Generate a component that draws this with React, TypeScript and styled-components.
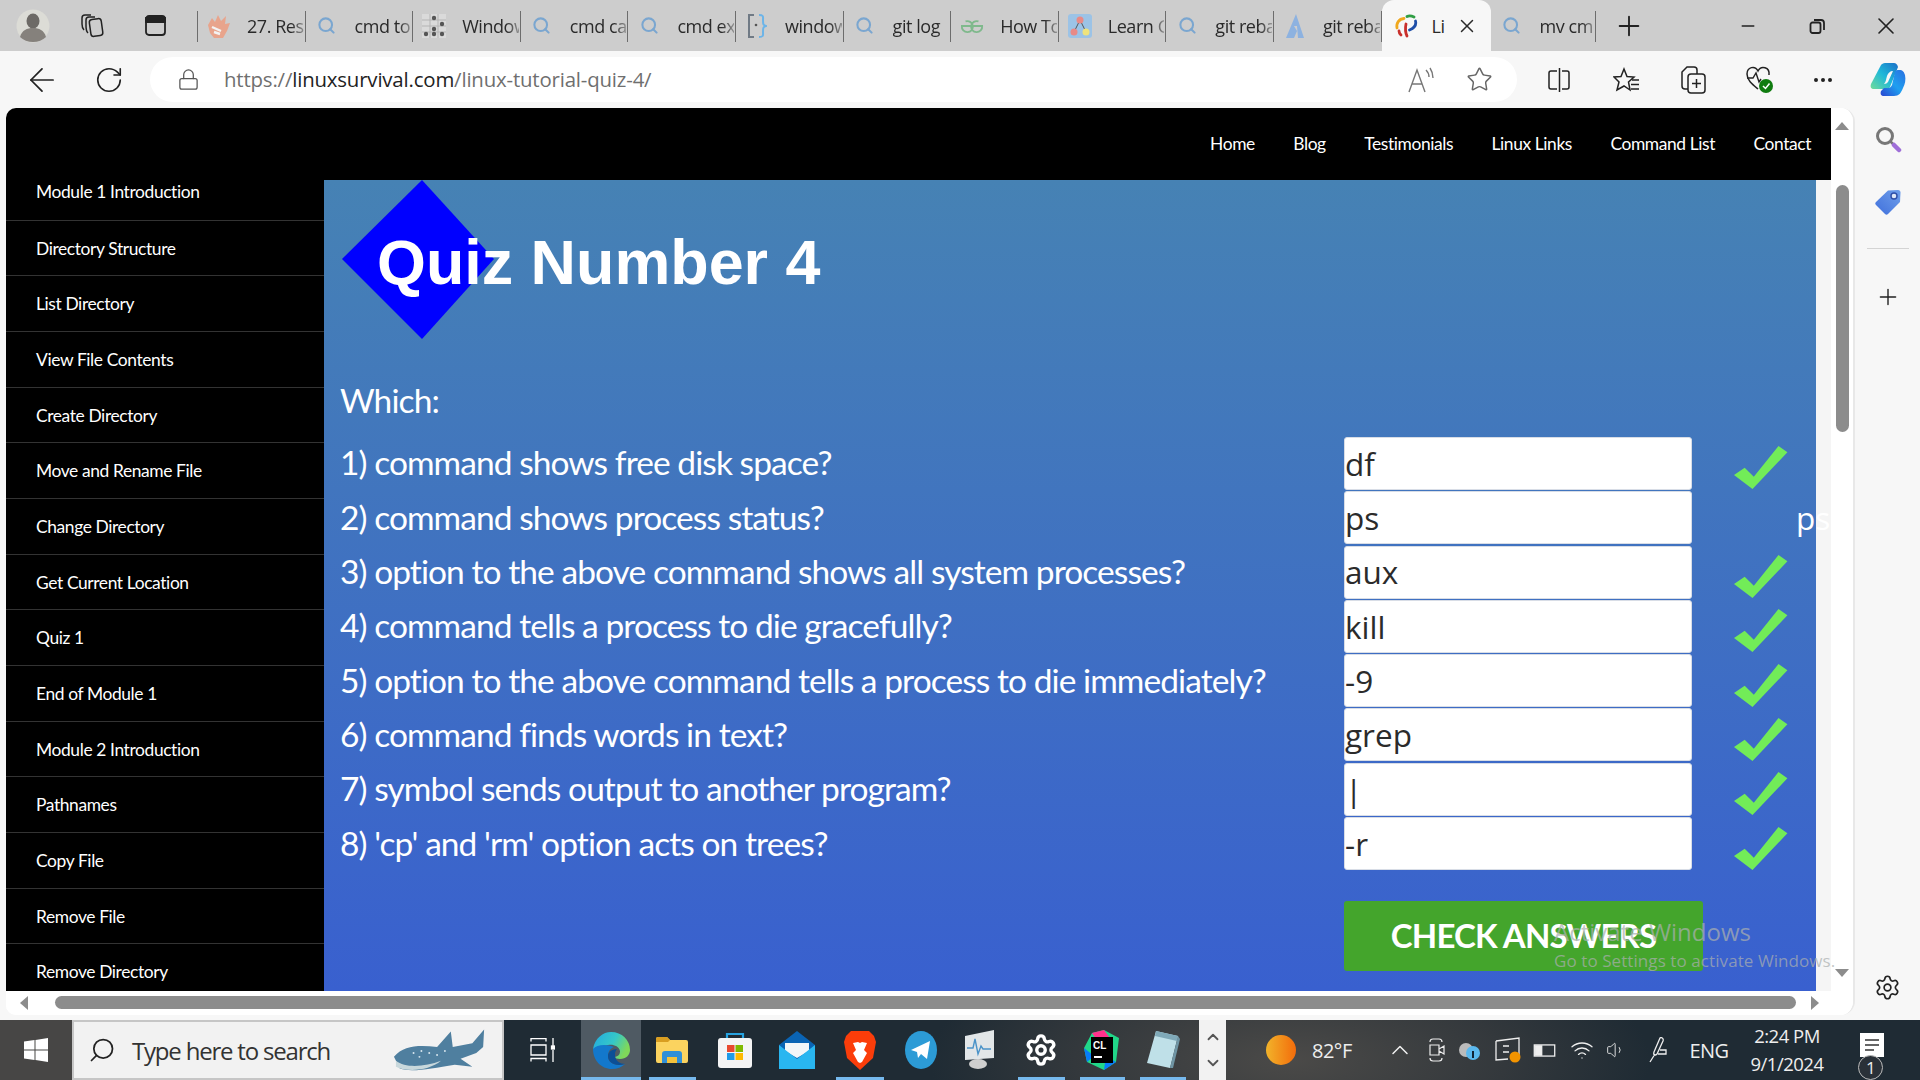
import React from "react";
import styled, { createGlobalStyle } from "styled-components";
import {
  ArrowLeft, RotateCw, Lock, Star, MoreHorizontal, Search, X, Plus, Minus,
  Settings, ChevronUp, ChevronDown, Wifi, Volume1,
} from "lucide-react";

const Global = createGlobalStyle`
  html, body { margin: 0; padding: 0; width: 1920px; height: 1080px; overflow: hidden; background: #f7f7f7; }
  * { box-sizing: border-box; }
`;

const Shell = styled.div`
  width: 1920px; height: 1080px; display: flex; flex-direction: column; overflow: hidden; position: relative;
  font-family: "Lato", "Liberation Sans", sans-serif; background: #f7f7f7;
`;

/* ---------- tab strip ---------- */
const TabStrip = styled.div`
  height: 51px; flex: none; display: flex; align-items: stretch; background: #cdcdcd; color: #222;
`;
const StripTool = styled.div<{ $w: number }>`
  width: ${(p) => p.$w}px; flex: none; display: flex; align-items: center; justify-content: center;
`;
const Tab = styled.div<{ $active?: boolean; $w?: number }>`
  width: ${(p) => p.$w ?? 107.6}px; flex: none; display: flex; align-items: center; height: 51px;
  gap: ${(p) => (p.$active ? 14 : 16)}px;
  padding-left: ${(p) => (p.$active ? 12 : 9)}px; padding-right: 2px; overflow: hidden; white-space: nowrap; position: relative;
  font: 400 18px "Open Sans", "Liberation Sans", sans-serif; letter-spacing: -0.45px; color: #2a2a2a;
  background: ${(p) => (p.$active ? "#f7f7f7" : "transparent")};
  border-radius: ${(p) => (p.$active ? "12px 12px 0 0" : "0")};
  &::after {
    content: ""; position: absolute; right: 0; top: 11px; bottom: 9px; width: 1px;
    background: ${(p) => (p.$active ? "transparent" : "#6d6d6d")};
  }
`;
const TabStart = styled.div`
  width: 1px; margin: 11px 0 9px; background: #6d6d6d; flex: none;
`;
const TabIcon = styled.span`
  width: 24px; height: 24px; flex: none; display: flex; align-items: center; justify-content: center;
`;
const TabLabel = styled.span`
  flex: 1; min-width: 0; overflow: hidden;
  -webkit-mask-image: linear-gradient(90deg, #000 78%, rgba(0, 0, 0, 0.35) 100%);
  mask-image: linear-gradient(90deg, #000 78%, rgba(0, 0, 0, 0.35) 100%);
`;
const TabClose = styled.span`
  position: absolute; right: 13px; top: 15px; width: 22px; height: 22px; background: #f7f7f7;
  display: flex; align-items: center; justify-content: center;
`;
const Spring = styled.div` flex: 1; `;

/* ---------- toolbar ---------- */
const Toolbar = styled.div`
  height: 57px; flex: none; display: flex; align-items: center; background: #f7f7f7; color: #222;
`;
const ToolBtn = styled.div<{ $w: number }>`
  width: ${(p) => p.$w}px; flex: none; height: 45px; display: flex; align-items: center; justify-content: center;
`;
const AddressBar = styled.div`
  width: 1367px; height: 45px; flex: none; background: #fff; border-radius: 23px; margin: 0 9px 0 0;
  display: flex; align-items: center; padding: 0 6px 0 27px;
`;
const Url = styled.div`
  margin: -2px 0 0 24px; font: 400 20.4px "Open Sans", "Liberation Sans", sans-serif; letter-spacing: -0.17px; color: #6f6f6f; white-space: nowrap;
  b { font-weight: 400; color: #222; }
`;

/* ---------- body ---------- */
const Body = styled.div` flex: 1; display: flex; min-height: 0; `;
const Pane = styled.div`
  width: 1849px; margin-left: 6px; margin-bottom: 5px; flex: none; display: flex; flex-direction: column; background: #fff;
  border-radius: 10px 14px 14px 10px; overflow: hidden; border-right: 2px solid #e8e8e8;
`;
const PaneTop = styled.div` height: 883px; flex: none; display: flex; `;
const Page = styled.div` width: 1825px; flex: none; display: flex; flex-direction: column; background: #f5f5f5; `;
const TopNav = styled.nav`
  height: 72px; flex: none; display: flex; justify-content: flex-end; align-items: center; gap: 38.5px; padding: 0 20px 2px 0;
  font-size: 17.4px; letter-spacing: -0.4px; color: #fff; background: #000;
`;
const Columns = styled.div` flex: 1; display: flex; min-height: 0; `;
const SideNav = styled.div` width: 318px; flex: none; overflow: hidden; background: #000; `;
const SideItem = styled.div`
  height: 55.69px; padding: 16px 0 0 30px; line-height: 24px; font-size: 17.4px; letter-spacing: -0.38px; color: #fff;
  border-bottom: 1px solid #333; white-space: nowrap;
  &:first-child { height: 40.5px; padding-top: 0; }
`;
const Main = styled.main`
  width: 1492px; flex: none; padding-left: 16px; background: linear-gradient(180deg, #4682b4 0%, #3960cf 100%); position: relative;
`;
const TitleBlock = styled.div`
  height: 159px; position: relative; display: flex; align-items: center; padding: 4px 0 0 37px; margin-bottom: 41px;
`;
const Diamond = styled.svg`
  position: absolute; left: 2px; top: 0; width: 152px; height: 159px;
`;
const Title = styled.h1`
  position: relative; margin: 0; font: 700 62.85px "Liberation Sans", Arial, sans-serif; color: #fff; white-space: nowrap;
`;
const Which = styled.div`
  font-size: 33.5px; line-height: 40px; height: 56.35px; color: #fff; letter-spacing: -0.9px;
`;
const Row = styled.div`
  height: 54.3px; display: flex; align-items: center;
`;
const Question = styled.div`
  width: 1004px; flex: none; margin-top: -2px; font-size: 33.5px; color: #fff; letter-spacing: -0.93px; white-space: nowrap;
`;
const AnswerBox = styled.div`
  width: 348px; height: 53px; flex: none; background: #fff; border: 1px solid #d8dde6; border-radius: 3px;
  font: 400 31.5px "Open Sans", "Liberation Sans", sans-serif; color: #2b2b2b; display: flex; align-items: center; line-height: 1;
`;
const Verdict = styled.div`
  margin: 9px 0 0 42px; width: 54px; height: 43px; flex: none;
`;
const WrongAnswer = styled.div`
  margin-left: 104px; flex: none; font: 400 31.5px "Open Sans", "Liberation Sans", sans-serif; color: #fff;
  position: relative; z-index: 2;
`;
const CheckButton = styled.div`
  margin: 30px 0 0 1004px; width: 359px; height: 70px; padding-bottom: 2px; background: #44a52c; color: #fff; display: flex; align-items: center; justify-content: center;
  font-weight: 700; font-size: 33px; letter-spacing: -0.85px; border-radius: 3px;
`;
const ScrollV = styled.div`
  width: 22px; flex: none; background: #fff; position: relative;
`;
const ThumbV = styled.div`
  position: absolute; left: 5px; top: 77px; width: 13px; height: 247px; background: #8c8c8c; border-radius: 7px;
`;
const ArrowV = styled.div<{ $down?: boolean }>`
  position: absolute; left: 4px; ${(p) => (p.$down ? "bottom: 14px; border-top: 8px solid #8c8c8c;" : "top: 14px; border-bottom: 8px solid #8c8c8c;")}
  width: 0; height: 0; border-left: 7.5px solid transparent; border-right: 7.5px solid transparent;
`;
const ScrollH = styled.div`
  flex: 1; display: flex; align-items: flex-start; padding: 5px 0 0 14px; background: #fff;
`;
const ArrowH = styled.div<{ $right?: boolean }>`
  width: 0; height: 0; flex: none; border-top: 7px solid transparent; border-bottom: 7px solid transparent;
  ${(p) => (p.$right ? "border-left: 8px solid #8c8c8c;" : "border-right: 8px solid #8c8c8c;")}
`;
const ThumbH = styled.div`
  width: 1741px; height: 13px; margin: 0 15px 0 27px; background: #8c8c8c; border-radius: 7px; flex: none;
`;
const SidePanel = styled.aside`
  flex: 1; display: flex; flex-direction: column; align-items: center; background: #f7f7f7; color: #222; padding-bottom: 16px;
`;
const PanelBtn = styled.div<{ $mt?: number }>`
  width: 40px; height: 34px; display: flex; align-items: center; justify-content: center; margin-top: ${(p) => p.$mt ?? 0}px;
`;
const PanelRule = styled.div<{ $mt?: number }>`
  width: 42px; height: 1px; background: #d4d4d4; margin-top: ${(p) => p.$mt ?? 0}px;
`;

/* ---------- taskbar ---------- */
const Taskbar = styled.div`
  height: 60px; flex: none; display: flex; align-items: stretch; color: #fff;
  background: radial-gradient(ellipse 360px 130px at 1290px 40px, #4b4a48 0%, #33383c 60%, #1f2b34 100%), #1f2b34;
`;
const StartBtn = styled.div`
  width: 72px; flex: none; background: #474645; display: flex; align-items: center; justify-content: center;
`;
const SearchBox = styled.div`
  width: 432px; flex: none; background: #f2f2f2; border: 2px solid #c6c6c6; display: flex; align-items: center; position: relative;
  padding-left: 14px; gap: 16px; color: #333; font: 400 24px "Open Sans", "Liberation Sans", sans-serif; letter-spacing: -1.2px; overflow: hidden; white-space: nowrap;
`;
const SearchGlyph = styled.span`
  display: flex; flex: none; transform: scaleX(-1);
`;
const Shark = styled.svg`
  position: absolute; right: 12px; top: 5px; width: 98px; height: 46px;
`;
const TaskBtn = styled.div<{ $w?: number; $active?: boolean; $on?: boolean }>`
  width: ${(p) => p.$w ?? 62}px; flex: none; display: flex; align-items: center; justify-content: center; position: relative;
  background: ${(p) => (p.$active ? "#4f5a63" : "transparent")};
  &::after {
    content: ""; position: absolute; left: ${(p) => (p.$active ? 0 : 8)}px; right: ${(p) => (p.$active ? 0 : 7)}px; bottom: 0; height: 3px;
    background: ${(p) => (p.$on ? "#76b9ed" : "transparent")};
  }
`;
const Overflow = styled.div`
  width: 27px; margin-left: 6px; flex: none; background: #f2f2f2; color: #555; display: flex; flex-direction: column; align-items: center; justify-content: space-around; padding: 4px 0;
`;
const Tray = styled.div`
  flex: 1; display: flex; align-items: center; font: 400 20px "Open Sans", "Liberation Sans", sans-serif; letter-spacing: -0.5px; color: #eee;
`;
const TrayItem = styled.div<{ $w: number }>`
  width: ${(p) => p.$w}px; flex: none; display: flex; align-items: center; justify-content: center; position: relative;
`;
const Clock = styled.div`
  width: 118px; flex: none; font-size: 18.5px; line-height: 28px; text-align: center; white-space: nowrap;
`;
const Weather = styled.div`
  width: 30px; height: 30px; border-radius: 50%; background: linear-gradient(90deg, #f2b32a, #f36c0b); margin-left: 40px; flex: none;
`;
const Temp = styled.div` margin-left: 16px; width: 68px; font-size: 20px; flex: none; `;
const NoticeBadge = styled.div`
  position: absolute; left: 12px; top: 22px; width: 25px; height: 25px; border-radius: 50%; border: 1px solid #bbb; background: #2a3138;
  font-size: 17px; line-height: 23px; text-align: center; color: #eee;
`;

/* ---------- overlay ---------- */
const Watermark = styled.div`
  position: absolute; left: 1554px; top: 913px; color: rgba(170, 175, 175, 0.72); pointer-events: none; white-space: nowrap;
  font-family: "Open Sans", "Liberation Sans", sans-serif;
  div:first-child { font-size: 24px; line-height: 38px; }
  div:last-child { font-size: 17px; line-height: 20px; letter-spacing: 0.08px; }
`;

/* ---------- drawings ---------- */
const Mag = () => <Search size={19} color="#7aa6d0" strokeWidth={2.6} />;
const Favicon = ({ kind }: { kind: string }) => {
  switch (kind) {
    case "hand":
      return (
        <svg width="24" height="24" viewBox="0 0 24 24">
          <path d="M1 11 5 4l3 4 3-7 3 6 5-5-1 8 5-1-3 8-4 7H7l-4-5z" fill="#e8a48c" />
          <path d="M5 13l9 4M7 18l6 2" stroke="#f3f3f3" strokeWidth="2.400" />
        </svg>
      );
    case "grid":
      return (
        <svg width="24" height="24" viewBox="0 0 24 24">
          <rect width="24" height="24" fill="#dadada" />
          <path d="M8 0v24M16 0v24M0 6h24M0 12h24M0 18h24" stroke="#b4b4b4" />
          <g fill="#555">
            <circle cx="12" cy="4" r="2.200" /><circle cx="20" cy="10" r="2.200" /><circle cx="12" cy="15" r="2.200" />
            <circle cx="4" cy="20" r="2.200" /><circle cx="12" cy="20" r="2.200" /><circle cx="20" cy="20" r="2.200" />
          </g>
        </svg>
      );
    case "brace":
      return (
        <svg width="20" height="24" viewBox="0 0 20 24" fill="none" strokeWidth="2">
          <path d="M7 1H2v22h5" stroke="#707a85" />
          <path d="M12 1c5 0 4 2 4 5 0 4 0 5 3 6-3 1-3 2-3 6 0 3 1 5-4 5" stroke="#6cb4e8" />
          <circle cx="9" cy="11" r="1.300" fill="#555" />
        </svg>
      );
    case "gfg":
      return (
        <svg width="26" height="16" viewBox="0 0 26 16" fill="none" stroke="#7fb98c" strokeWidth="2">
          <path d="M13 8H24A6 6 0 1 1 20 3" /><path d="M13 8H2A6 6 0 1 0 6 3" />
        </svg>
      );
    case "tree":
      return (
        <svg width="24" height="24" viewBox="0 0 24 24">
          <rect width="24" height="24" rx="3" fill="#9cc3e6" />
          <path d="M12 6 6 18M12 6l6 12" stroke="#555" />
          <circle cx="12" cy="6" r="3.500" fill="#e88a86" /><circle cx="6" cy="18" r="3.500" fill="#e88a86" /><circle cx="18" cy="18" r="3.500" fill="#efe37c" />
        </svg>
      );
    case "azure":
      return (
        <svg width="20" height="24" viewBox="0 0 20 24">
          <path d="M11 0 1 24h8l3-7-3-5 3 0 1 12h6z" fill="#8db2e0" />
        </svg>
      );
    default:
      return (
        <svg width="24" height="24" viewBox="0 0 24 24" fill="none" strokeWidth="2.800" strokeLinecap="round">
          <path d="M13 2.500C15 1.500 18 2 20 3" stroke="#2f9e44" />
          <path d="M21.500 7c1 4-1 7-6 9" stroke="#1f4fa8" />
          <path d="M3 14C2 9 5 5 10 4.500" stroke="#f0a81e" />
          <path d="M12 10c-1 5-1 8 1 12M5 17c0 2 1 3 2 4" stroke="#c9302c" />
        </svg>
      );
  }
};

const tabs: [string, string][] = [
  ["hand", "27. Rest"], ["mag", "cmd to r"], ["grid", "Windows"], ["mag", "cmd cat"], ["mag", "cmd exit"],
  ["brace", "windows"], ["mag", "git log"], ["gfg", "How To"], ["tree", "Learn Git"], ["mag", "git rebase"], ["azure", "git rebase"],
];

const navLinks = ["Home", "Blog", "Testimonials", "Linux Links", "Command List", "Contact"];
const sideLinks = [
  "Module 1 Introduction", "Directory Structure", "List Directory", "View File Contents", "Create Directory",
  "Move and Rename File", "Change Directory", "Get Current Location", "Quiz 1", "End of Module 1",
  "Module 2 Introduction", "Pathnames", "Copy File", "Remove File", "Remove Directory",
];
const quiz: { q: string; a: string; ok: boolean; wrong?: string }[] = [
  { q: "1) command shows free disk space?", a: "df", ok: true },
  { q: "2) command shows process status?", a: "ps", ok: false, wrong: "ps" },
  { q: "3) option to the above command shows all system processes?", a: "aux", ok: true },
  { q: "4) command tells a process to die gracefully?", a: "kill", ok: true },
  { q: "5) option to the above command tells a process to die immediately?", a: "-9", ok: true },
  { q: "6) command finds words in text?", a: "grep", ok: true },
  { q: "7) symbol sends output to another program?", a: "|", ok: true },
  { q: "8) 'cp' and 'rm' option acts on trees?", a: "-r", ok: true },
];

const CheckMark = () => (
  <svg viewBox="0 0 54 43" width="54" height="43">
    <path d="M0 29 10.700 21.700 19.800 30.700 44.500 0 53.400 6.300 18.500 43Z" fill="#72ec58" />
  </svg>
);

export default function App() {
  return (
    <Shell>
      <Global />
      <TabStrip>
        <StripTool $w={66}>
          <svg width="34" height="34" viewBox="0 0 34 34">
            <circle cx="17" cy="17" r="16.500" fill="#dcdcd6" />
            <ellipse cx="17" cy="12" rx="6.500" ry="7.500" fill="#6d6a66" />
            <path d="M4 28c2-7 7-9 13-9s11 2 13 9c-3 3-8 5-13 5s-10-2-13-5z" fill="#85817c" />
          </svg>
        </StripTool>
        <StripTool $w={52}>
          <svg width="25" height="25" viewBox="0 0 25 25" fill="none" stroke="#222" strokeWidth="1.500">
            <rect x="10" y="6" width="12" height="17" rx="3" transform="rotate(-8 16 14)" />
            <path d="M8 20C6 18 6 16 6 13V7c0-2 1-3 3-3h6M4 17C2 15 2 13 2 11V5c0-2 1-3 3-3h6" />
          </svg>
        </StripTool>
        <StripTool $w={74}>
          <svg width="21" height="21" viewBox="0 0 21 21" fill="none" stroke="#222" strokeWidth="1.800">
            <rect x="1" y="1" width="19" height="19" rx="3" /><path d="M1 3h19v4H1z" fill="#222" />
          </svg>
        </StripTool>
        <StripTool $w={5} />
        <TabStart />
        {tabs.map(([icon, label], i) => (
          <Tab key={i}>
            <TabIcon>{icon === "mag" ? <Mag /> : <Favicon kind={icon} />}</TabIcon>
            <TabLabel>{label}</TabLabel>
          </Tab>
        ))}
        <Tab $active $w={109}>
          <TabIcon><Favicon kind="tux" /></TabIcon>
          Li
          <TabClose><X size={22} strokeWidth={1.6} /></TabClose>
        </Tab>
        <Tab $w={105}>
          <TabIcon><Mag /></TabIcon>
          <TabLabel>mv cmd</TabLabel>
        </Tab>
        <StripTool $w={66}><Plus size={32} strokeWidth={1.4} /></StripTool>
        <Spring />
        <StripTool $w={70}><Minus size={20} strokeWidth={1.6} /></StripTool>
        <StripTool $w={68}>
          <svg width="16" height="16" viewBox="0 0 16 16" fill="none" stroke="#222" strokeWidth="1.800">
            <rect x="1.500" y="4.500" width="10" height="10.500" rx="2" /><path d="M5 2h7a3 3 0 0 1 3 3v7" />
          </svg>
        </StripTool>
        <StripTool $w={69}><X size={28} strokeWidth={1.4} /></StripTool>
      </TabStrip>

      <Toolbar>
        <ToolBtn $w={84}><ArrowLeft size={38} strokeWidth={1.1} /></ToolBtn>
        <ToolBtn $w={49}><RotateCw size={30} strokeWidth={1.3} /></ToolBtn>
        <ToolBtn $w={17} />
        <AddressBar>
          <Lock size={23} strokeWidth={1.3} color="#555" />
          <Url>https://<b>linuxsurvival.com</b>/linux-tutorial-quiz-4/</Url>
          <Spring />
          <ToolBtn $w={54}>
            <svg width="28" height="26" viewBox="0 0 28 26" fill="none" stroke="#777" strokeWidth="1.400">
              <path d="M2 25 10 3l8 22M5 17h10M19 3c2 2 3 4 3 7M23 1c2 3 3 6 3 10" />
            </svg>
          </ToolBtn>
          <ToolBtn $w={63}><Star size={27} strokeWidth={1.3} color="#666" /></ToolBtn>
        </AddressBar>
        <ToolBtn $w={66}>
          <svg width="24" height="24" viewBox="0 0 24 24" fill="none" stroke="#222" strokeWidth="1.500">
            <path d="M10 3H4a2 2 0 0 0-2 2v14a2 2 0 0 0 2 2h6M15 3h5a2 2 0 0 1 2 2v14a2 2 0 0 1-2 2h-5M12.500 0v24" />
          </svg>
        </ToolBtn>
        <ToolBtn $w={68}>
          <svg width="26" height="26" viewBox="0 0 26 26" fill="none" stroke="#222" strokeWidth="1.500">
            <path d="M11 2 14 9.500 21 10 15.500 15 17 23 11 19 4 23 6 15 1 10 8 9.500Z" />
            <path d="M19 13h7M18 17.500h8M18 22h8" />
          </svg>
        </ToolBtn>
        <ToolBtn $w={67}>
          <svg width="25" height="28" viewBox="0 0 25 28" fill="none" stroke="#222" strokeWidth="1.500">
            <rect x="7" y="8" width="17" height="19" rx="3" /><path d="M15.500 13v9M11 17.500h9M7 23H4a3 3 0 0 1-3-3V6l5-5h7a3 3 0 0 1 3 3v4" />
          </svg>
        </ToolBtn>
        <ToolBtn $w={64}>
          <svg width="27" height="29" viewBox="0 0 27 29" fill="none">
            <path d="M12 24C6 19 1 15 1 9c0-7 8-9 11-3 3-6 12-4 11 4" stroke="#222" strokeWidth="1.500" />
            <path d="M1 13h6l3-5 3 9 2-3" stroke="#222" strokeWidth="1.400" />
            <circle cx="20" cy="21" r="7" fill="#107c10" />
            <path d="M17 21l2.500 2.500 4-5" stroke="#fff" strokeWidth="1.500" />
          </svg>
        </ToolBtn>
        <ToolBtn $w={64}><MoreHorizontal size={24} strokeWidth={2} /></ToolBtn>
        <ToolBtn $w={66}>
          <svg width="36" height="34" viewBox="0 0 36 34">
            <defs>
              <linearGradient id="cpA" x1="0" y1="1" x2="1" y2="0"><stop offset="0" stopColor="#6fdc9a" /><stop offset="0.500" stopColor="#1fb8d8" /><stop offset="1" stopColor="#1b6fc8" /></linearGradient>
              <linearGradient id="cpB" x1="0" y1="1" x2="1" y2="0"><stop offset="0" stopColor="#2a45d0" /><stop offset="0.500" stopColor="#1e9ff0" /><stop offset="1" stopColor="#2a6fe0" /></linearGradient>
            </defs>
            <path d="M11 2c1-1 2-2 4-2h9c2 0 3 1 4 4L20 24c-1 2-3 2-5 2H4C1 26 0 24 1 21z" fill="url(#cpA)" />
            <path d="M25 9c1-2 2-2 4-2 4 0 5 2 6 5 1 5 0 9-2 13-2 5-4 8-9 8H14c-3 0-4-2-3-5l3-3h4c2 0 3-1 4-3z" fill="url(#cpB)" />
            <path d="M17 13c1-3 3-5 6-5l-5 11c-1 1-2 2-4 2 2-2 2-5 3-8z" fill="#f7f7f7" />
          </svg>
        </ToolBtn>
      </Toolbar>

      <Body>
        <Pane>
          <PaneTop>
            <Page>
              <TopNav>{navLinks.map((l) => <span key={l}>{l}</span>)}</TopNav>
              <Columns>
                <SideNav>{sideLinks.map((l) => <SideItem key={l}>{l}</SideItem>)}</SideNav>
                <Main>
                  <TitleBlock>
                    <Diamond viewBox="0 0 152 159"><polygon points="80,0 152,79 80,159 0,79" fill="#0000ff" /></Diamond>
                    <Title>Quiz Number 4</Title>
                  </TitleBlock>
                  <Which>Which:</Which>
                  <div>
                    {quiz.map((r) => (
                      <Row key={r.q}>
                        <Question>{r.q}</Question>
                        <AnswerBox>{r.a}</AnswerBox>
                        {r.ok ? <Verdict><CheckMark /></Verdict> : <WrongAnswer>{r.wrong}</WrongAnswer>}
                      </Row>
                    ))}
                  </div>
                  <CheckButton>CHECK ANSWERS</CheckButton>
                </Main>
              </Columns>
            </Page>
            <ScrollV>
              <ArrowV />
              <ThumbV />
              <ArrowV $down />
            </ScrollV>
          </PaneTop>
          <ScrollH>
            <ArrowH />
            <ThumbH />
            <ArrowH $right />
          </ScrollH>
        </Pane>
        <SidePanel>
          <PanelBtn $mt={14}>
            <svg width="28" height="28" viewBox="0 0 28 28" fill="none">
              <circle cx="11" cy="11" r="7.500" stroke="#777" strokeWidth="3" />
              <path d="M16.500 16.500 20 20" stroke="#777" strokeWidth="2.500" />
              <path d="M20 20l5 5" stroke="#9f6fd8" strokeWidth="4.500" strokeLinecap="round" />
            </svg>
          </PanelBtn>
          <PanelBtn $mt={29}>
            <svg width="26" height="26" viewBox="0 0 26 26">
              <defs><linearGradient id="tg" x1="1" y1="0" x2="0" y2="1"><stop offset="0" stopColor="#6f9fea" /><stop offset="1" stopColor="#3f6fdc" /></linearGradient></defs>
              <path d="M13 1.500 23 1c1.500 0 2.500 1 2.500 2.500L25 13 13 25c-1 1-2 1-3 0L1 16c-1-1-1-2 0-3z" fill="url(#tg)" />
              <circle cx="19" cy="7" r="3" fill="#dfe8f8" stroke="#2f4fa8" strokeWidth="1.400" />
            </svg>
          </PanelBtn>
          <PanelRule $mt={29} />
          <PanelBtn $mt={31}><Plus size={26} strokeWidth={1.3} /></PanelBtn>
          <Spring />
          <PanelBtn><Settings size={27} strokeWidth={1.5} /></PanelBtn>
        </SidePanel>
      </Body>

      <Taskbar>
        <StartBtn>
          <svg width="24" height="24" viewBox="0 0 24 24" fill="#fff">
            <path d="M0 3.500 10.500 2v9.500H0zM11.500 2 24 0v11.500H11.500zM0 12.500h10.500V22L0 20.500zM11.500 12.500H24V24l-12.500-2z" />
          </svg>
        </StartBtn>
        <SearchBox>
          <SearchGlyph><Search size={28} strokeWidth={1.5} color="#222" /></SearchGlyph>
          Type here to search
          <Shark viewBox="0 0 100 46">
            <path d="M2 30C12 18 28 18 46 20L60 4l2 16 20-4 12-14-1 18-7 6-16 6 12 8-18-2C40 42 20 46 8 42Z" fill="#4f7f9f" />
            <path d="M4 34c10 8 30 6 46 0-12 10-34 12-46 6z" fill="#c8d8dc" />
            <g fill="#d7e6ee"><circle cx="22" cy="26" r="1" /><circle cx="30" cy="24" r="1" /><circle cx="38" cy="26" r="1" /><circle cx="46" cy="28" r="1" /><circle cx="54" cy="24" r="1" /><circle cx="28" cy="30" r="1" /></g>
          </Shark>
        </SearchBox>
        <TaskBtn $w={77}>
          <svg width="25" height="24" viewBox="0 0 25 24" fill="none" stroke="#fff" strokeWidth="1.300">
            <path d="M1 3.500V.5h15v3M1 7h15v10H1zM1 23.500v-3h15v3M23 0v8M23 12v12" />
            <rect x="21.500" y="8" width="3" height="3" fill="#fff" />
          </svg>
        </TaskBtn>
        <TaskBtn $w={60} $active $on>
          <svg width="37" height="37" viewBox="0 0 37 37">
            <defs><linearGradient id="edg" x1="0" y1="0" x2="1" y2="0.400"><stop offset="0" stopColor="#22a8e0" /><stop offset="0.600" stopColor="#35c8c8" /><stop offset="1" stopColor="#7fd85a" /></linearGradient></defs>
            <path d="M0 17C2 6 10 0 18 0c11 0 19 8 19 18 0 5-4 9-10 9-3 0-5-1-5-2 4-1 5-3 5-6-1-5-7-7-12-6-6 1-10 2-15 4z" fill="url(#edg)" />
            <path d="M0 17c0 11 8 20 19 20 5 0 10-2 13-5-9 3-17-1-17-8 0-5 3-8 6-9-7-3-17-3-21 2z" fill="#1378cc" />
            <path d="M15 24c0 7 8 11 17 8-4 0-11-3-10-10 0-2 1-4 2-5-5 0-9 3-9 7z" fill="#0c4f96" />
          </svg>
        </TaskBtn>
        <TaskBtn $on>
          <svg width="32" height="26" viewBox="0 0 32 26">
            <path d="M0 2a2 2 0 0 1 2-2h9l3 3h16a2 2 0 0 1 2 2v19a2 2 0 0 1-2 2H2a2 2 0 0 1-2-2z" fill="#fbd35f" />
            <path d="M0 2a2 2 0 0 1 2-2h9l3 3-2 2H0z" fill="#d99e21" />
            <path d="M6 26V17a3 3 0 0 1 3-3h14a3 3 0 0 1 3 3v9h-5v-6H11v6z" fill="#2f8fd8" />
            <rect x="11" y="20" width="10" height="6" fill="#f4c23c" />
          </svg>
        </TaskBtn>
        <TaskBtn $w={63}>
          <svg width="36" height="36" viewBox="0 0 36 36">
            <path d="M10 8V2h16v6" fill="none" stroke="#27a3e0" strokeWidth="2.200" />
            <rect x="1" y="6" width="34" height="30" rx="3" fill="#f4f4f4" />
            <rect x="10" y="13" width="7.500" height="7" fill="#e8492f" /><rect x="18.500" y="13" width="7.500" height="7" fill="#7fba00" />
            <rect x="10" y="21" width="7.500" height="7" fill="#1e9be8" /><rect x="18.500" y="21" width="7.500" height="7" fill="#fdb900" />
          </svg>
        </TaskBtn>
        <TaskBtn>
          <svg width="36" height="38" viewBox="0 0 36 38">
            <path d="M0 14 18 0l18 14v24H0z" fill="#0a64b4" />
            <path d="M6 12h24v8L18 27 6 20z" fill="#f2f6f8" />
            <path d="M0 14v24h36V14L18 28z" fill="#29b6f0" />
          </svg>
        </TaskBtn>
        <TaskBtn $w={63} $on>
          <svg width="32" height="40" viewBox="0 0 32 40">
            <path d="M7 1h18l5 5 2 6-3 16-13 12L3 28 0 12l2-6z" fill="#fb3d0a" />
            <path d="M9 13l5-1 2 1 2-1 5 1-3 7 3 3-5 9-2 1-2-1-5-9 3-3z" fill="#fff" />
          </svg>
        </TaskBtn>
        <TaskBtn $w={59}>
          <svg width="32" height="38" viewBox="0 0 32 38">
            <ellipse cx="16" cy="19" rx="16" ry="19" fill="#2c9bd6" />
            <path d="M6 19 25 10l-3 18-6-5-3 4-1-6z" fill="#fff" />
          </svg>
        </TaskBtn>
        <TaskBtn $w={60}>
          <svg width="36" height="40" viewBox="0 0 36 40">
            <path d="M3 6 32 0v28L3 30z" fill="#e2e6e8" />
            <path d="M5 18h6l2-9 3 15 3-8 2 3h8" fill="none" stroke="#4b93c8" strokeWidth="1.400" />
            <ellipse cx="16" cy="34" rx="9" ry="5" fill="#cfcfcf" />
          </svg>
        </TaskBtn>
        <TaskBtn $w={62} $on><Settings size={34} strokeWidth={2.4} color="#fff" /></TaskBtn>
        <TaskBtn $w={60} $on>
          <svg width="36" height="40" viewBox="0 0 36 40">
            <path d="M8 3 20 0l15 8-3 24-12 8L3 32 0 18z" fill="#21d789" />
            <path d="M8 3 20 0l6 8-12 4z" fill="#ff318c" />
            <path d="M3 32 0 18l10 8z" fill="#087cfa" />
            <path d="M32 32l-12 8 2-14z" fill="#087cfa" />
            <rect x="7" y="7" width="22" height="26" fill="#000" />
            <text x="9" y="19" fontSize="10" fontWeight="700" fill="#fff" fontFamily="Liberation Sans">CL</text>
            <rect x="10" y="26" width="8" height="2" fill="#fff" />
          </svg>
        </TaskBtn>
        <TaskBtn $w={61} $on>
          <svg width="34" height="40" viewBox="0 0 34 40">
            <path d="M10 1 32 6 24 38 1 33z" fill="#bfe0e8" />
            <path d="M10 1 32 6l-1 5-22-5z" fill="#7fa9b8" />
            <path d="M24 38 32 6l2 3-7 29z" fill="#6f95a4" />
          </svg>
        </TaskBtn>
        <Overflow><ChevronUp size={18} strokeWidth={2.4} /><ChevronDown size={18} strokeWidth={2.4} /></Overflow>
        <Tray>
          <Weather />
          <Temp>82°F</Temp>
          <TrayItem $w={40}><ChevronUp size={28} strokeWidth={1.3} /></TrayItem>
          <TrayItem $w={34}>
            <svg width="16" height="24" viewBox="0 0 16 24" fill="none" stroke="#eee" strokeWidth="1.200">
              <path d="M1 4c0-2 1-3 3-3h6c2 0 3 1 3 3M1 20c0 2 1 3 3 3h6c2 0 3-1 3-3M1 7v10h9V7zM10 11l5-3v8l-5-3" />
            </svg>
          </TrayItem>
          <TrayItem $w={32}>
            <svg width="24" height="26" viewBox="0 0 24 26"><circle cx="8" cy="13" r="7" fill="#bbb" /><circle cx="15" cy="16" r="7" fill="#5ab8ee" /><rect x="14" y="14" width="2" height="7" fill="#123" /></svg>
          </TrayItem>
          <TrayItem $w={44}>
            <svg width="26" height="26" viewBox="0 0 26 26" fill="none" stroke="#eee" strokeWidth="1.300">
              <path d="M1 4 24 1v17M1 4v19l12-1M8 9h6M8 15h6" /><circle cx="20" cy="20" r="5.500" fill="#f39400" stroke="none" />
            </svg>
          </TrayItem>
          <TrayItem $w={28}>
            <svg width="23" height="13" viewBox="0 0 24 14" fill="none" stroke="#eee" strokeWidth="1.400"><rect x="1" y="1" width="22" height="12" /><rect x="2" y="2" width="7" height="10" fill="#eee" /></svg>
          </TrayItem>
          <TrayItem $w={48}><Wifi size={24} strokeWidth={1.3} /></TrayItem>
          <TrayItem $w={20}><Volume1 size={30} strokeWidth={1.1} /></TrayItem>
          <TrayItem $w={64}>
            <svg width="24" height="26" viewBox="0 0 24 26" fill="none" stroke="#eee" strokeWidth="1.300">
              <path d="M14 1 8 15c-1 3 1 4 3 2l6-13c1-3-2-4-3-3zM4 25l5-8M14 13h6v4h-8" />
            </svg>
          </TrayItem>
          <TrayItem $w={38}>ENG</TrayItem>
          <Clock>2:24 PM<br />9/1/2024</Clock>
          <TrayItem $w={52}>
            <svg width="24" height="34" viewBox="0 0 24 34"><path d="M0 0h24v24H8l-4 6v-6H0z" fill="#fff" /><path d="M5 7h14M5 12h14M5 17h9" stroke="#333" strokeWidth="1.400" /></svg>
            <NoticeBadge>1</NoticeBadge>
          </TrayItem>
        </Tray>
      </Taskbar>

      <Watermark>
        <div>Activate Windows</div>
        <div>Go to Settings to activate Windows.</div>
      </Watermark>
    </Shell>
  );
}
